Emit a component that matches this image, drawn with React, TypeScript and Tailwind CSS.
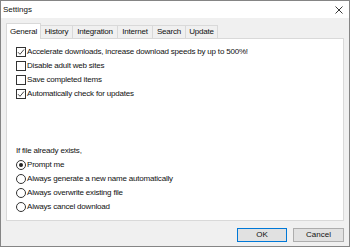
import React from 'react';

const font = { fontFamily: '"Liberation Sans", Arial, sans-serif' };

function CheckBox({ checked, label }: { checked?: boolean; label: string }) {
  return (
    <div className="flex h-[14px] items-center">
      <div className="ml-[9px] flex h-[10px] w-[10px] items-center justify-center border border-[#333] bg-white">
        {checked && (
          <svg width="8" height="8" viewBox="0 0 8 8">
            <path d="M1 4.2 L3 6.3 L7 1.5" fill="none" stroke="#333" strokeWidth="0.9" />
          </svg>
        )}
      </div>
      <span className="ml-[1px] text-[8px] tracking-[-0.2px] text-[#111]">{label}</span>
    </div>
  );
}

function Radio({ checked, label }: { checked?: boolean; label: string }) {
  return (
    <div className="flex h-[14px] items-center">
      <div className="ml-[9px] flex h-[10px] w-[10px] items-center justify-center rounded-full border border-[#333] bg-white">
        {checked && <div className="h-[4px] w-[4px] rounded-full bg-[#222]" />}
      </div>
      <span className="ml-[1px] text-[8px] tracking-[-0.2px] text-[#111]">{label}</span>
    </div>
  );
}

export default function App() {
  const tabs = ['History', 'Integration', 'Internet', 'Search', 'Update'];
  const widths = ['w-[32px]', 'w-[45px]', 'w-[35px]', 'w-[33px]', 'w-[32px]'];

  return (
    <div style={font} className="flex h-[247px] w-[350px] flex-col border border-[#858585] bg-[#f0f0f0]">
      {/* Title bar */}
      <div className="flex h-[17px] items-center justify-between bg-white pl-[2px] pr-[6px]">
        <span className="text-[8px] text-[#111]">Settings</span>
        <svg width="8" height="8" viewBox="0 0 8 8">
          <path d="M0.5 0.5 L7.5 7.5 M7.5 0.5 L0.5 7.5" stroke="#222" strokeWidth="0.9" />
        </svg>
      </div>

      {/* Tabs */}
      <div className="ml-[5px] mt-[5px] flex h-[15px] items-end">
        <div className="relative z-10 -mb-[1px] flex h-[16px] w-[35px] items-center justify-center border border-b-0 border-[#d9d9d9] bg-white text-[8px] tracking-[-0.2px] text-[#111]">
          General
        </div>
        {tabs.map((t, i) => (
          <div
            key={t}
            className={`flex h-[13px] ${widths[i]} items-center justify-center border border-l-0 border-b-0 border-[#d9d9d9] bg-[#f0f0f0] text-[8px] tracking-[-0.2px] text-[#111]`}
          >
            {t}
          </div>
        ))}
      </div>

      {/* Panel */}
      <div className="ml-[5px] h-[183px] w-[338px] border border-[#d9d9d9] bg-white pt-[6px]">
        <CheckBox checked label="Accelerate downloads, increase download speeds by up to 500%!" />
        <CheckBox label="Disable adult web sites" />
        <CheckBox label="Save completed items" />
        <CheckBox checked label="Automatically check for updates" />
        <div className="ml-[9px] mt-[43px] flex h-[14px] items-center text-[8px] tracking-[-0.2px] text-[#111]">
          If file already exists,
        </div>
        <Radio checked label="Prompt me" />
        <Radio label="Always generate a new name automatically" />
        <Radio label="Always overwrite existing file" />
        <Radio label="Always cancel download" />
      </div>

      {/* Buttons */}
      <div className="mr-[5px] mt-[7px] flex justify-end gap-[6px]">
        <button className="flex h-[14px] w-[50px] items-center justify-center border border-[#0078d7] bg-[#e1e1e1] text-[8px] text-[#111]">
          OK
        </button>
        <button className="flex h-[14px] w-[51px] items-center justify-center border border-[#adadad] bg-[#e1e1e1] text-[8px] text-[#111]">
          Cancel
        </button>
      </div>
    </div>
  );
}
